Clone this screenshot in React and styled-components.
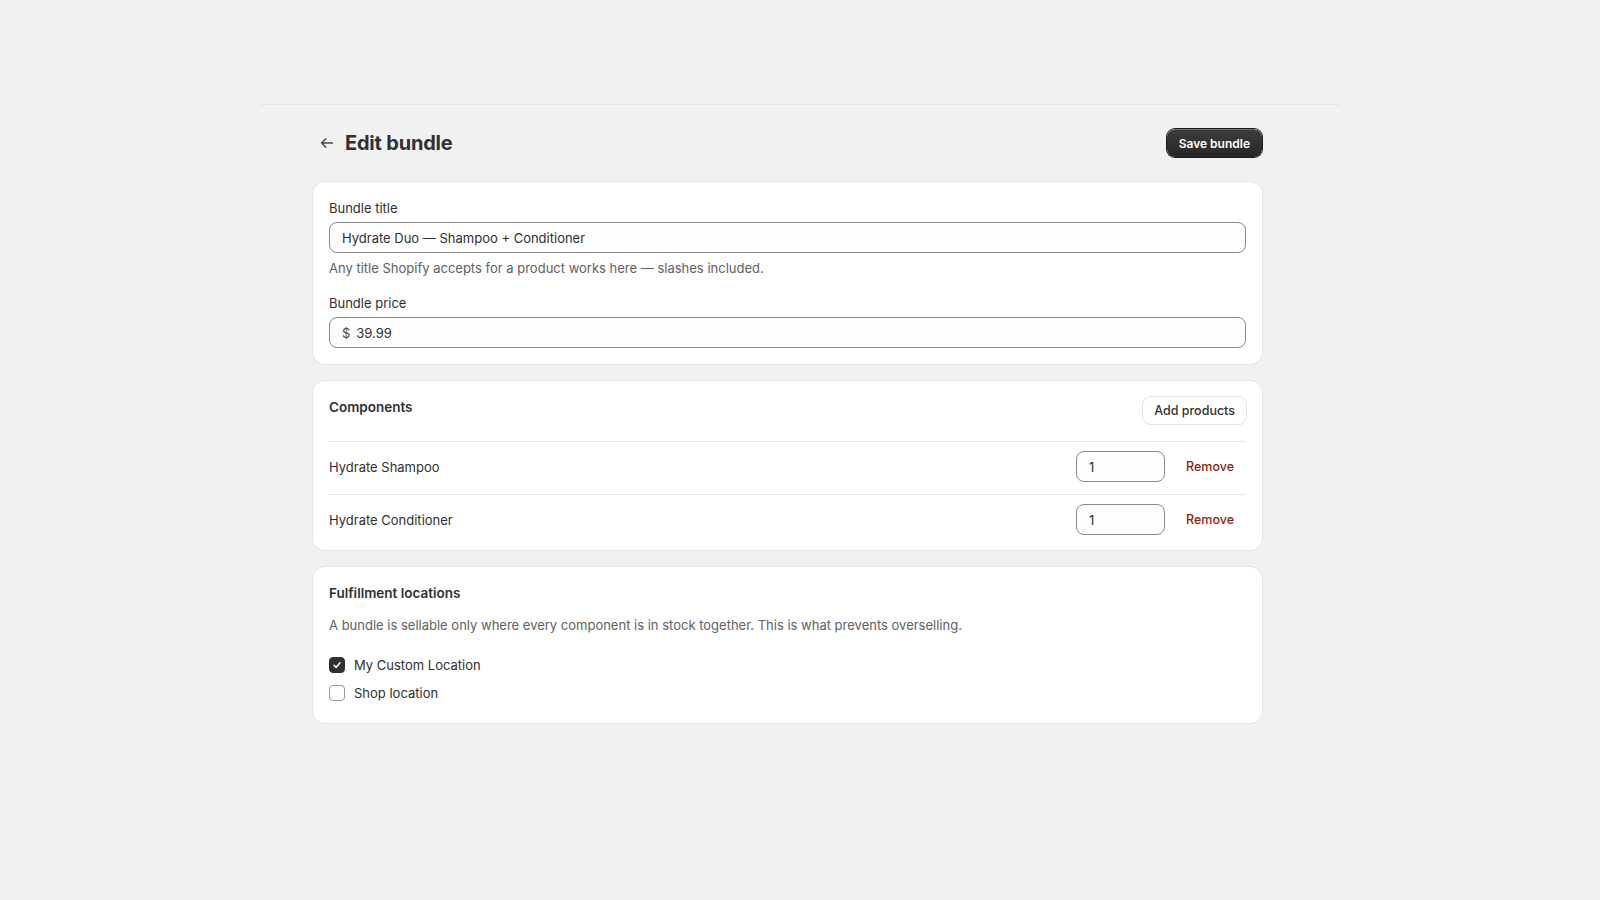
import styled, { createGlobalStyle } from "styled-components";

const GlobalStyle = createGlobalStyle`
  * { box-sizing: border-box; }
  body {
    margin: 0;
    background: #f1f1f1;
    font-family: Inter, "Noto Sans", "Liberation Sans", sans-serif;
    font-size: 13px;
    line-height: 20px;
    color: #303030;
  }
`;

const components = [
  { id: 1, title: "Hydrate Shampoo", qty: 1 },
  { id: 2, title: "Hydrate Conditioner", qty: 1 },
];

const locations = [
  { id: "custom", name: "My Custom Location", checked: true },
  { id: "shop", name: "Shop location", checked: false },
];

function ArrowLeft() {
  return (
    <svg width="20" height="20" viewBox="0 0 20 20" fill="none">
      <path
        d="M15.5 10H4.8M8.8 5.8L4.6 10L8.8 14.2"
        stroke="#4a4a4a"
        strokeWidth="1.5"
        strokeLinecap="round"
        strokeLinejoin="round"
      />
    </svg>
  );
}

function Check() {
  return (
    <svg width="10" height="10" viewBox="0 0 10 10" fill="none">
      <path
        d="M2 5.3L4.1 7.4L8 2.8"
        stroke="#fff"
        strokeWidth="1.5"
        strokeLinecap="round"
        strokeLinejoin="round"
      />
    </svg>
  );
}

export default function App() {
  return (
    <>
      <GlobalStyle />
      <Frame>
        <Header>
          <TitleWrap>
            <BackButton aria-label="Back">
              <ArrowLeft />
            </BackButton>
            <Title>Edit bundle</Title>
          </TitleWrap>
          <PrimaryButton>Save bundle</PrimaryButton>
        </Header>

        <Stack>
          <Card>
            <Field>
              <Label>Bundle title</Label>
              <InputBox>
                <InputText>Hydrate Duo — Shampoo + Conditioner</InputText>
              </InputBox>
              <HelpText>
                Any title Shopify accepts for a product works here — slashes included.
              </HelpText>
            </Field>
            <Field $spaced>
              <Label>Bundle price</Label>
              <InputBox>
                <Prefix>$</Prefix>
                <InputText>39.99</InputText>
              </InputBox>
            </Field>
          </Card>

          <Card $tight>
            <CardHeader>
              <CardTitle>Components</CardTitle>
              <SecondaryButton>Add products</SecondaryButton>
            </CardHeader>
            {components.map((c) => (
              <ComponentRow key={c.id}>
                <span>{c.title}</span>
                <RowActions>
                  <QtyInput>{c.qty}</QtyInput>
                  <RemoveButton>Remove</RemoveButton>
                </RowActions>
              </ComponentRow>
            ))}
          </Card>

          <Card>
            <CardTitle>Fulfillment locations</CardTitle>
            <Description>
              A bundle is sellable only where every component is in stock together. This is
              what prevents overselling.
            </Description>
            <CheckList>
              {locations.map((l) => (
                <CheckRow key={l.id}>
                  <CheckBox $checked={l.checked}>{l.checked && <Check />}</CheckBox>
                  {l.name}
                </CheckRow>
              ))}
            </CheckList>
          </Card>
        </Stack>
      </Frame>
    </>
  );
}

const Frame = styled.div`
  width: 1080px;
  margin: 104px auto 0;
  border-top: 1px solid #e6e6e6;
  padding: 24px 78px 40px 53px;
`;

const Header = styled.div`
  display: flex;
  align-items: center;
  justify-content: space-between;
  height: 28px;
  margin-bottom: 25px;
`;

const TitleWrap = styled.div`
  display: flex;
  align-items: center;
  gap: 4px;
`;

const BackButton = styled.button`
  width: 28px;
  height: 28px;
  border: none;
  background: transparent;
  padding: 0;
  display: flex;
  align-items: center;
  justify-content: center;
  border-radius: 8px;
  cursor: pointer;
`;

const Title = styled.h1`
  margin: 0;
  font-size: 20px;
  line-height: 24px;
  font-weight: 700;
  color: #303030;
  letter-spacing: -0.2px;
`;

const PrimaryButton = styled.button`
  height: 28px;
  padding: 0 12px;
  border: none;
  border-radius: 8px;
  background: linear-gradient(180deg, #3d3d3d 0%, #262626 100%);
  box-shadow: 0 0 0 1px #1a1a1a, inset 0 1px 0 rgba(255, 255, 255, 0.25);
  color: #fff;
  font-family: inherit;
  font-size: 12px;
  font-weight: 600;
  cursor: pointer;
`;

const Stack = styled.div`
  display: flex;
  flex-direction: column;
  gap: 17px;
`;

const Card = styled.section`
  background: #fff;
  border-radius: 12px;
  box-shadow: 0 0 0 1px #e6e6e6, 0 1px 0 rgba(26, 26, 26, 0.07);
  padding: ${(p) => (p.$tight ? "16px 16px 3px" : "16px")};
`;

const Field = styled.div`
  display: flex;
  flex-direction: column;
  margin-top: ${(p) => (p.$spaced ? "15px" : "0")};
`;

const Label = styled.label`
  margin-bottom: 4px;
  color: #303030;
`;

const InputBox = styled.div`
  height: 31px;
  display: flex;
  align-items: center;
  gap: 6px;
  padding: 0 12px;
  border: 1px solid #8a8a8a;
  border-radius: 8px;
  background: #fdfdfd;
`;

const InputText = styled.span`
  color: #303030;
`;

const Prefix = styled.span`
  color: #4a4a4a;
`;

const HelpText = styled.p`
  margin: 5px 0 0;
  color: #616161;
`;

const CardHeader = styled.div`
  display: flex;
  align-items: flex-start;
  justify-content: space-between;
  padding-bottom: 17px;
`;

const CardTitle = styled.h2`
  margin: 0;
  font-size: 13.5px;
  line-height: 20px;
  font-weight: 600;
  color: #303030;
`;

const SecondaryButton = styled.button`
  height: 27px;
  padding: 0 11px;
  border: none;
  border-radius: 8px;
  background: #fff;
  box-shadow: 0 0 0 1px #e3e3e3, 0 1px 0 #d4d4d4;
  color: #303030;
  font-family: inherit;
  font-size: 12.5px;
  font-weight: 500;
  cursor: pointer;
`;

const ComponentRow = styled.div`
  display: flex;
  align-items: center;
  justify-content: space-between;
  padding: 9px 0 12px;
  border-top: 1px solid #e6e6e6;
`;

const RowActions = styled.div`
  display: flex;
  align-items: center;
  gap: 9px;
`;

const QtyInput = styled.div`
  width: 89px;
  height: 31px;
  display: flex;
  align-items: center;
  padding: 0 12px;
  border: 1px solid #8a8a8a;
  border-radius: 8px;
  background: #fdfdfd;
`;

const RemoveButton = styled.button`
  border: none;
  background: transparent;
  padding: 4px 12px;
  color: #8e1f0b;
  font-family: inherit;
  font-size: 12.5px;
  font-weight: 500;
  cursor: pointer;
`;

const Description = styled.p`
  margin: 12px 0 0;
  color: #616161;
`;

const CheckList = styled.div`
  display: flex;
  flex-direction: column;
  margin-top: 16px;
`;

const CheckRow = styled.label`
  display: flex;
  align-items: center;
  gap: 9px;
  padding: 4px 0;
  color: #303030;
`;

const CheckBox = styled.span`
  width: 16px;
  height: 16px;
  border-radius: 4px;
  display: flex;
  align-items: center;
  justify-content: center;
  background: ${(p) => (p.$checked ? "#303030" : "#fff")};
  border: 1px solid ${(p) => (p.$checked ? "#303030" : "#9a9a9a")};
`;
